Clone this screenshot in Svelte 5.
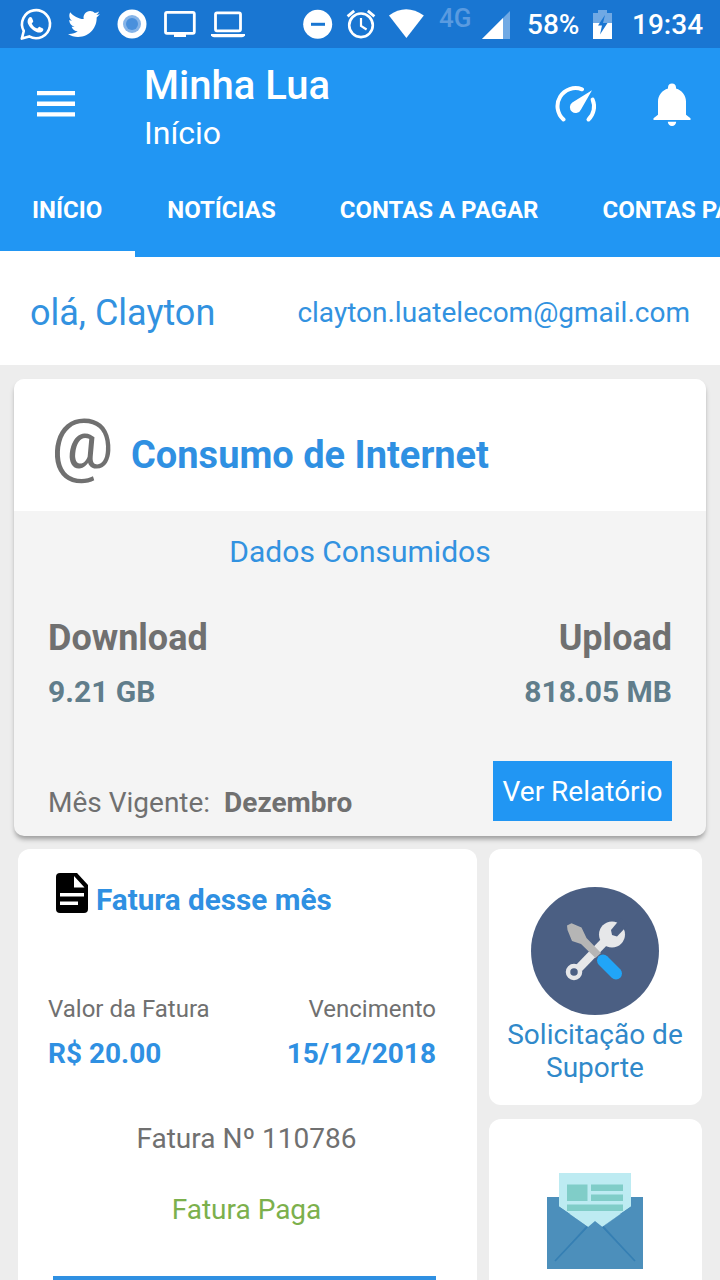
<script lang="ts">
  const tabs = ['Início', 'Notícias', 'Contas a pagar', 'Contas pagas'];
  let activeTab = $state(0);

  const user = { name: 'Clayton', email: 'clayton.luatelecom@gmail.com' };
  const usage = { download: '9.21 GB', upload: '818.05 MB', month: 'Dezembro' };
  const invoice = { value: 'R$ 20.00', due: '15/12/2018', number: '110786' };
</script>

<div class="screen">
  <div class="status-bar">
    <svg class="status-icons" width="260" height="48" viewBox="0 0 260 48" fill="none" stroke="#fff">
      <!-- whatsapp -->
      <path d="M21.800 38.600l2-7.600a14 14 0 1 1 5.400 5.400z" stroke-width="2.600" stroke-linejoin="round" />
      <path d="M28.600 18.200c1-1.600 2.600-1.600 3.400-.2l1.200 2.900c.3.900-.9 1.700-1.500 2.500 1.300 2.500 3 4.100 5.600 5.200.9-.8 1.600-2.200 2.600-1.700l3 1.500c1 .6.300 2.800-1.200 3.600-2.300 1.100-5 .5-8.300-1.800-3.200-2.400-5.800-6.100-5.800-8.500 0-1.500.4-2.700 1-3.500z" fill="#fff" stroke="none" />
      <!-- twitter -->
      <path transform="translate(68 8) scale(1.33)" d="M24 4.557c-.883.392-1.832.656-2.828.775 1.017-.609 1.798-1.574 2.165-2.724-.951.564-2.005.974-3.127 1.195-.897-.957-2.178-1.555-3.594-1.555-3.179 0-5.515 2.966-4.797 6.045-4.091-.205-7.719-2.165-10.148-5.144-1.290 2.213-.669 5.108 1.523 6.574-.806-.026-1.566-.247-2.229-.616-.054 2.281 1.581 4.415 3.949 4.890-.693.188-1.452.232-2.224.084.626 1.956 2.444 3.379 4.600 3.419-2.070 1.623-4.678 2.348-7.290 2.040 2.179 1.397 4.768 2.212 7.548 2.212 9.142 0 14.307-7.721 13.995-14.646.962-.695 1.797-1.562 2.457-2.549z" fill="#fff" stroke="none" />
      <!-- chromium -->
      <circle cx="132" cy="24" r="14.500" fill="#fff" stroke="none" />
      <circle cx="132" cy="24" r="9" fill="#86b4e8" stroke="none" />
      <circle cx="132" cy="24" r="6" fill="#4a90dc" stroke="none" />
      <!-- monitor -->
      <rect x="165.500" y="12.300" width="28.800" height="21" rx="1.500" stroke-width="2.800" />
      <path d="M174 34h12v3h-12z" fill="#fff" stroke="none" />
      <!-- laptop -->
      <rect x="215.500" y="12.800" width="25" height="18" rx="1.500" stroke-width="2.800" />
      <path d="M211 34h34v1.500q-1 1.700-3 1.700h-28q-2 0-3-1.700z" fill="#fff" stroke="none" />
    </svg>
    <div class="status-right">
      <svg width="140" height="48" viewBox="300 0 140 48" fill="none" stroke="#fff">
        <circle cx="317.700" cy="24.300" r="14.500" fill="#fff" stroke="none" />
        <path d="M311 24.300h14" stroke="#1976d2" stroke-width="3" />
        <circle cx="361" cy="25.300" r="11.800" stroke-width="2.600" />
        <path d="M361 18v8l5.600 3.500" stroke-width="2.200" />
        <path d="M347.600 16.300l6.600-5.500M374.400 16.300l-6.600-5.500" stroke-width="2.800" />
        <path d="M389 15.500Q406 3 423.800 15.500L406.400 38z" fill="#fff" stroke="none" />
      </svg>
      <span class="network">4G</span>
      <svg width="40" height="48" viewBox="474 0 40 48">
        <path d="M510 11v28h-28z" fill="#70a9e4" />
        <path d="M503 18v21h-21z" fill="#fff" />
      </svg>
      <span class="percent">58%</span>
      <svg class="battery" width="20" height="48" viewBox="592 0 20 48">
        <path d="M593 13h5v-3h9v3h5v11h-19z" fill="#70a9e4" />
        <path d="M593 23h19v16h-19z" fill="#fff" />
        <path d="M605 15l-7 10.500h4l-2 9 7.500-11.500h-4.500z" fill="#1976d2" />
      </svg>
      <span class="clock">19:34</span>
    </div>
  </div>

  <header class="app-bar">
    <div class="toolbar">
      <button class="icon-btn menu" aria-label="Menu">
        <svg width="38" height="26" viewBox="0 0 38 26" fill="#fff">
          <path d="M0 0h38v4.300H0zM0 10.600h38v4.300H0zM0 21.300h38v4.300H0z" />
        </svg>
      </button>
      <div class="titles">
        <h1>Minha Lua</h1>
        <p>Início</p>
      </div>
      <button class="icon-btn gauge" aria-label="Velocidade">
        <svg width="42" height="38" viewBox="0 0 42 38" fill="none" stroke="#fff" stroke-width="4" stroke-linecap="round">
          <path d="M8.500 34.500A18 18 0 0 1 27 4.300" />
          <path d="M37.600 14.500A18 18 0 0 1 33.500 34.500" />
          <path d="M37 5.300L26 24.500A5.800 5.800 0 1 1 17.300 17.500z" fill="#fff" stroke="none" />
        </svg>
      </button>
      <button class="icon-btn bell" aria-label="Notificações">
        <svg width="38" height="44" viewBox="0 0 38 44" fill="#fff">
          <path d="M19 .5c2.400 0 4 1.700 4 3.900v1C29 7.300 33 12.300 33 18.500v13.200l4.500 3.500v1.800H.5v-1.800L5 31.700V18.500C5 12.300 9 7.300 15 5.400v-1C15 2.200 16.600.5 19 .5zM14.800 38.800h8.400a4.200 4.200 0 0 1-8.400 0z" />
        </svg>
      </button>
    </div>
    <nav class="tabs">
      {#each tabs as tab, i}
        <button class="tab" class:active={activeTab === i} onclick={() => (activeTab = i)}>{tab}</button>
      {/each}
    </nav>
  </header>

  <section class="greeting">
    <span class="hello">olá, {user.name}</span>
    <span class="email">{user.email}</span>
  </section>

  <main>
    <section class="card usage">
      <div class="usage-head">
        <span class="at">@</span>
        <h2>Consumo de Internet</h2>
      </div>
      <div class="usage-body">
        <p class="subtitle">Dados Consumidos</p>
        <div class="row labels">
          <span>Download</span>
          <span>Upload</span>
        </div>
        <div class="row values">
          <span>{usage.download}</span>
          <span>{usage.upload}</span>
        </div>
        <div class="usage-foot">
          <p class="month">Mês Vigente: <b>{usage.month}</b></p>
          <button class="report">Ver Relatório</button>
        </div>
      </div>
    </section>

    <div class="columns">
      <section class="card invoice">
        <div class="invoice-head">
          <svg width="32" height="40" viewBox="0 0 32 40">
            <path d="M4 0h17l11 12v24a4 4 0 0 1-4 4H4a4 4 0 0 1-4-4V4a4 4 0 0 1 4-4z" />
            <path d="M18 3v11.500h10.500zM4 20h24v3.600H4zM4 28.500h18v3.600H4z" fill="#fff" />
          </svg>
          <h3>Fatura desse mês</h3>
        </div>
        <div class="row invoice-labels">
          <span>Valor da Fatura</span>
          <span>Vencimento</span>
        </div>
        <div class="row invoice-values">
          <span>{invoice.value}</span>
          <span>{invoice.due}</span>
        </div>
        <p class="number">Fatura Nº {invoice.number}</p>
        <p class="paid">Fatura Paga</p>
        <div class="invoice-action"></div>
      </section>

      <div class="side">
        <section class="card support">
          <svg width="128" height="128" viewBox="0 0 128 128">
            <circle cx="64" cy="64" r="64" fill="#4b5f83" />
            <!-- wrench -->
            <path d="M48 81L77 51" stroke="#e6e7e9" stroke-width="8.500" />
            <circle cx="43" cy="85" r="6" fill="none" stroke="#e6e7e9" stroke-width="4.500" />
            <circle cx="81" cy="47.500" r="13" fill="#e6e7e9" />
            <path d="M80 43L90 31 97 38 86 49.500 81 48z" fill="#4b5f83" />
            <!-- screwdriver -->
            <path d="M36 38.500l4.500-2.200 10 4.200 5 10.500L70 66l-5.500 5L50 57l-9-3-4.500-11z" fill="#b5b5b5" />
            <path d="M72 73.500L85 86.500" stroke="#21a5f7" stroke-width="12" stroke-linecap="round" />
          </svg>
          <p>Solicitação de Suporte</p>
        </section>
        <section class="card mail">
          <svg width="96" height="96" viewBox="0 0 96 96">
            <path d="M0 24h96v72H0z" fill="#4c8fbb" />
            <path d="M12 0h72v33.500L55.500 54 48 48l-7 6L12 33.500z" fill="#bdebf2" />
            <path d="M20 11.500h20.500V28H20zM44 11.500h32V18H44zM44 21.500h32V28H44zM20 31.500h56V38H20z" fill="#80cdc8" />
            <path d="M12 33.500L41 54 10 86l29-33zM84 33.500L55 54l31 32-29-33z" fill="#4284b5" />
            <path d="M12 33.500V41h11zM84 33.500V41H73z" fill="#4c8fbb" />
            <path d="M40 54L8 88M56 54l32 34" stroke="#357fb3" stroke-width="1.800" />
          </svg>
        </section>
      </div>
    </div>
  </main>
</div>

<style>
  :global(body) {
    margin: 0;
  }

  .screen {
    width: 720px;
    height: 1280px;
    overflow: hidden;
    display: flex;
    flex-direction: column;
    background: #ededed;
    font-family: Roboto, 'Liberation Sans', sans-serif;
    color: #707070;
  }

  h1, h2, h3, p {
    margin: 0;
  }

  svg {
    display: block;
    flex: none;
  }

  button {
    border: 0;
    padding: 0;
    background: none;
    font-family: inherit;
    color: inherit;
  }

  .status-bar {
    height: 48px;
    flex: none;
    display: flex;
    justify-content: space-between;
    background: #1976d2;
    color: #fff;
  }

  .status-right {
    width: 420px;
    display: flex;
    line-height: 50px;
    font-weight: 500;
  }

  .network {
    width: 35px;
    margin-left: -1px;
    line-height: 36px;
    font-size: 26px;
    color: #5a9be0;
  }

  .percent {
    width: 65px;
    padding-left: 13px;
    font-size: 28px;
  }

  .clock {
    margin-left: 20px;
    font-size: 28px;
  }

  .app-bar {
    height: 209px;
    flex: none;
    background: #2196f3;
    color: #fff;
  }

  .toolbar {
    height: 114px;
    padding: 0 29px 2px 37px;
    box-sizing: border-box;
    display: flex;
    align-items: center;
  }

  .titles {
    flex: 1;
    margin-left: 69px;
    padding-top: 9px;
  }

  h1 {
    font-size: 40px;
    line-height: 50px;
    font-weight: 500;
  }

  .titles p {
    font-size: 32px;
    line-height: 45px;
  }

  .gauge {
    margin-right: 56px;
  }

  .bell {
    margin-top: 2px;
  }

  .tabs {
    height: 95px;
    display: flex;
    overflow: hidden;
  }

  .tab {
    box-sizing: border-box;
    flex: none;
    padding: 6px 32px 0;
    border-bottom: 6px solid transparent;
    font-size: 24px;
    font-weight: 700;
    text-transform: uppercase;
  }

  .tab.active {
    padding-right: 33px;
    border-color: #fff;
  }

  .greeting {
    height: 108px;
    flex: none;
    padding: 4px 30px 0;
    box-sizing: border-box;
    display: flex;
    align-items: center;
    justify-content: space-between;
    background: #fff;
    color: #3292e0;
  }

  .hello {
    font-size: 36px;
  }

  .email {
    padding-bottom: 2px;
    font-size: 28px;
  }

  main {
    padding: 14px 14px 0;
  }

  .card {
    background: #fff;
    border-radius: 12px;
    overflow: hidden;
  }

  .usage {
    height: 457px;
    border-radius: 10px;
    background: #f4f4f4;
    box-shadow: 0 4px 5px -1px rgba(0, 0, 0, 0.35);
  }

  .usage-head {
    height: 132px;
    padding: 0 38px;
    display: flex;
    align-items: center;
    background: #fff;
  }

  .at {
    width: 80px;
    margin: -2px 0 0 -1px;
    font-size: 70px;
    line-height: 80px;
  }

  h2 {
    padding-top: 19px;
    font-size: 38px;
    color: #2f90e2;
  }

  .usage-body {
    padding: 16px 34px 0;
  }

  .subtitle {
    font-size: 30px;
    line-height: 50px;
    text-align: center;
    color: #3292e0;
  }

  .row {
    display: flex;
    justify-content: space-between;
  }

  .labels {
    margin-top: 35px;
    font-size: 36px;
    line-height: 52px;
    font-weight: 700;
  }

  .values {
    font-size: 30px;
    line-height: 56px;
    font-weight: 700;
    color: #607d8b;
  }

  .usage-foot {
    margin-top: 41px;
    display: flex;
    justify-content: space-between;
  }

  .month {
    padding-top: 12px;
    font-size: 28px;
    line-height: 60px;
  }

  .month b {
    margin-left: 7px;
  }

  .report {
    width: 179px;
    height: 60px;
    padding-top: 1px;
    background: #2196f3;
    font-size: 28px;
    color: #fff;
  }

  .columns {
    margin: 13px 4px 0;
    display: flex;
    gap: 12px;
  }

  .invoice {
    width: 459px;
    height: 600px;
    padding: 0 41px 0 30px;
    box-sizing: border-box;
  }

  .invoice-head {
    margin: 24px 0 0 8px;
    display: flex;
    gap: 8px;
  }

  h3 {
    padding-top: 6px;
    font-size: 29.7px;
    line-height: 42px;
    color: #2f90e2;
  }

  .invoice-labels {
    margin-top: 68px;
    font-size: 24px;
    line-height: 40px;
  }

  .invoice-values {
    margin-top: 5px;
    font-size: 28px;
    line-height: 40px;
    font-weight: 700;
    color: #2f90e2;
  }

  .number,
  .paid {
    padding-left: 9px;
    font-size: 28px;
    line-height: 40px;
    text-align: center;
  }

  .number {
    margin-top: 45px;
  }

  .paid {
    margin-top: 31px;
    color: #7cb04c;
  }

  .invoice-action {
    height: 60px;
    margin: 46px 0 0 5px;
    background: #2f90e2;
  }

  .side {
    width: 213px;
    display: flex;
    flex-direction: column;
    gap: 14px;
  }

  .support {
    height: 256px;
    padding: 38px 1px 0 0;
    box-sizing: border-box;
    display: flex;
    flex-direction: column;
    align-items: center;
  }

  .support p {
    max-width: 190px;
    margin-top: 3px;
    font-size: 28px;
    line-height: 33px;
    text-align: center;
    color: #3089ca;
  }

  .mail {
    height: 256px;
    padding: 54px 1px 0 0;
    box-sizing: border-box;
    display: flex;
    justify-content: center;
  }
</style>
